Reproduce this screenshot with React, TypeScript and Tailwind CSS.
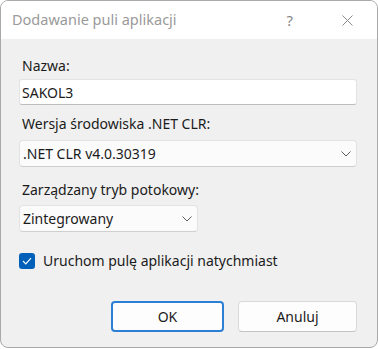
import React from 'react';

function Chevron() {
  return (
    <svg width="10" height="6" viewBox="0 0 10 6" fill="none">
      <path d="M0.5 0.5 L5 5 L9.5 0.5" stroke="#5c5c5c" strokeWidth="1" />
    </svg>
  );
}

function Dropdown({ value, className }: { value: string; className: string }) {
  return (
    <div
      className={`flex h-[27px] items-center justify-between rounded-[4px] border border-[#e3e3e3] border-b-[#cfcfcf] bg-[#fbfbfb] pl-[3px] pr-[5px] ${className}`}
    >
      <span>{value}</span>
      <Chevron />
    </div>
  );
}

export default function App() {
  return (
    <div className="h-[349px] w-[378px] bg-white" style={{ fontFamily: '"Noto Sans", "Open Sans", sans-serif' }}>
      <div className="flex h-[348px] w-[378px] flex-col overflow-hidden rounded-[8px] border border-[#a9a9a9] bg-[#f0f0f0] text-[14px] text-[#1b1b1b]">
        {/* title bar */}
        <div className="flex h-[38px] items-center bg-white">
          <span className="ml-[11px] text-[14.5px] text-[#9a9a9a]">Dodawanie puli aplikacji</span>
          <span className="ml-auto mr-[49px] text-[15px] text-[#8a8a8a]">?</span>
          <svg className="mr-[24px]" width="11" height="11" viewBox="0 0 11 11">
            <path d="M0.5 0.5 L10.5 10.5 M10.5 0.5 L0.5 10.5" stroke="#8a8a8a" strokeWidth="1" />
          </svg>
        </div>

        <div className="flex flex-1 flex-col pl-[18px] pr-[20px] pt-[17px]">
          <label className="ml-[3px] leading-[20px]">Nazwa:</label>
          <div className="mt-[3px] flex h-[26px] items-center rounded-[3px] border border-[#e3e3e3] border-b-[#bdbdbd] bg-white pl-[2px]">
            SAKOL3
          </div>

          <label className="ml-[3px] mt-[9px] leading-[20px]">Wersja środowiska .NET CLR:</label>
          <Dropdown value=".NET CLR v4.0.30319" className="mt-[6px] w-full" />

          <label className="ml-[3px] mt-[13px] leading-[20px]">Zarządzany tryb potokowy:</label>
          <Dropdown value="Zintegrowany" className="mt-[5px] w-[179px]" />

          <div className="mt-[18px] flex items-center">
            <span className="flex h-[16px] w-[16px] items-center justify-center rounded-[3px] bg-[#005fb8]">
              <svg width="10" height="8" viewBox="0 0 10 8" fill="none">
                <path d="M1 4 L3.8 6.8 L9 1.2" stroke="white" strokeWidth="1.2" />
              </svg>
            </span>
            <span className="ml-[8px]">Uruchom pulę aplikacji natychmiast</span>
          </div>

          <div className="mt-[30px] flex justify-end gap-[14px]">
            <button className="flex h-[31px] w-[113px] items-center justify-center rounded-[4px] border-2 border-[#2b7fd4] bg-[#fdfdfd]">
              OK
            </button>
            <button className="flex h-[31px] w-[119px] items-center justify-center rounded-[4px] border border-[#d9d9d9] border-b-[#c4c4c4] bg-[#fdfdfd]">
              Anuluj
            </button>
          </div>
        </div>
      </div>
    </div>
  );
}
